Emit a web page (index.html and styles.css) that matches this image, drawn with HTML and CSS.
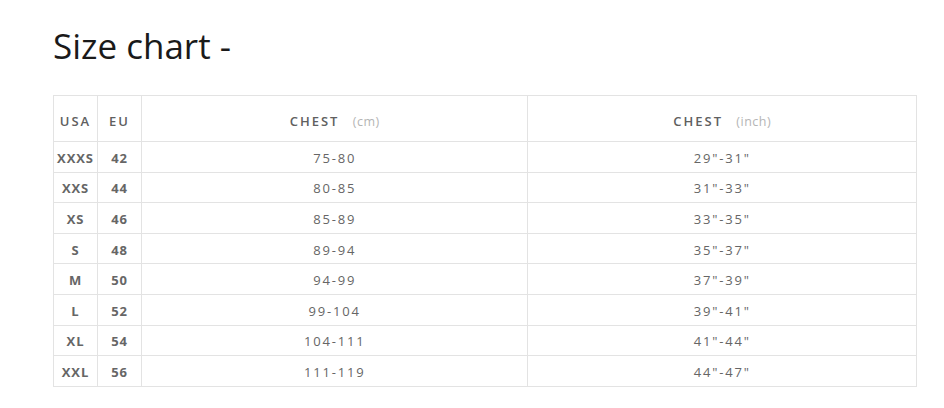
FILE: index.html
```html
<!DOCTYPE html>
<html>
<head>
<meta charset="utf-8">
<link rel="stylesheet" href="styles.css">
</head>
<body>
<div class="page">
  <h1 class="title">Size chart -</h1>
  <table class="chart">
    <colgroup>
      <col class="c-usa"><col class="c-eu"><col class="c-cm"><col class="c-in">
    </colgroup>
    <thead>
      <tr>
        <th>USA</th>
        <th>EU</th>
        <th>CHEST <span class="unit">(cm)</span></th>
        <th>CHEST <span class="unit">(inch)</span></th>
      </tr>
    </thead>
    <tbody>
      <tr><td class="b">XXXS</td><td class="b">42</td><td>75-80</td><td>29"-31"</td></tr>
      <tr><td class="b">XXS</td><td class="b">44</td><td>80-85</td><td>31"-33"</td></tr>
      <tr><td class="b">XS</td><td class="b">46</td><td>85-89</td><td>33"-35"</td></tr>
      <tr><td class="b">S</td><td class="b">48</td><td>89-94</td><td>35"-37"</td></tr>
      <tr><td class="b">M</td><td class="b">50</td><td>94-99</td><td>37"-39"</td></tr>
      <tr><td class="b">L</td><td class="b">52</td><td>99-104</td><td>39"-41"</td></tr>
      <tr><td class="b">XL</td><td class="b">54</td><td>104-111</td><td>41"-44"</td></tr>
      <tr><td class="b">XXL</td><td class="b">56</td><td>111-119</td><td>44"-47"</td></tr>
    </tbody>
  </table>
</div>
</body>
</html>
```
FILE: styles.css
```css
html, body {
  margin: 0;
  padding: 0;
  background: #fff;
}
.page {
  padding: 22px 27px 0 53px;
}
.title {
  margin: 0 0 25px 0;
  font-family: "Open Sans", "Noto Sans", sans-serif;
  font-weight: 400;
  font-size: 35px;
  line-height: 48px;
  color: #1a1a1a;
}
.chart {
  width: 864px;
  border-collapse: collapse;
  font-family: "Open Sans", "Noto Sans", sans-serif;
  color: #666;
  font-size: 13px;
}
.c-usa { width: 44px; }
.c-eu { width: 44px; }
.c-cm { width: 387px; }
.c-in { width: 389px; }
.chart th, .chart td {
  border: 1px solid #e3e3e3;
  text-align: center;
  padding: 0;
}
.chart th {
  height: 41px;
  padding-top: 4px;
  font-weight: 600;
  letter-spacing: 2px;
  color: #606060;
}
.chart td {
  height: 27.6px;
  padding-top: 2px;
  letter-spacing: 1.8px;
}
.chart td.b {
  font-weight: 700;
  letter-spacing: 0.9px;
}
.unit {
  margin-left: 8px;
  font-weight: 400;
  letter-spacing: 0.5px;
  font-size: 12.5px;
  color: #b5b5b5;
}
```
